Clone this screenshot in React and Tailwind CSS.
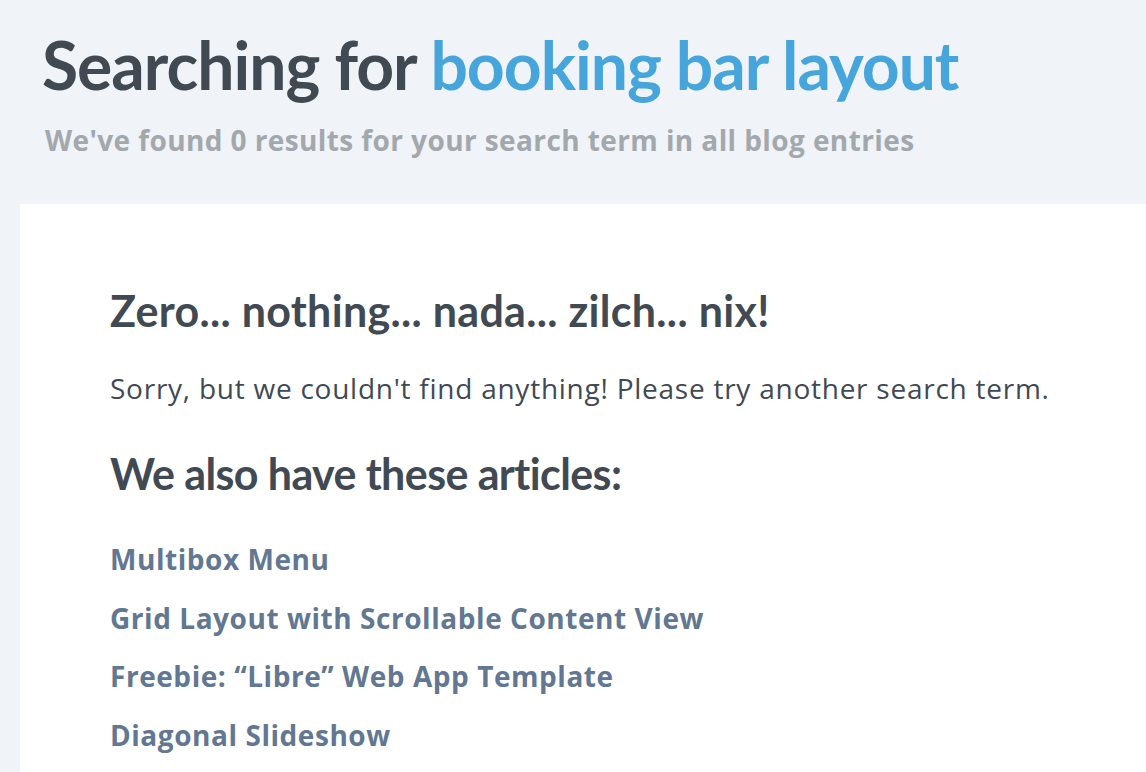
import React from 'react';

const articles = [
  'Multibox Menu',
  'Grid Layout with Scrollable Content View',
  'Freebie: \u201cLibre\u201d Web App Template',
  'Diagonal Slideshow',
];

const App = () => {
  return (
    <div className="min-h-[772px] bg-[#f0f3f8] font-['Lato',sans-serif] text-[#414a52] overflow-hidden">
      <header className="pl-[42px] pt-[25px] pb-[47px]">
        <h1 className="text-[66px] leading-[80px] font-bold tracking-[-1px] whitespace-nowrap">
          Searching for <span className="text-[#46a6dc]">booking bar layout</span>
        </h1>
        <p className="mt-[18px] pl-[3px] font-['Open_Sans',sans-serif] text-[28px] leading-[34px] font-bold tracking-[0.4px] text-[#a3a8ad] whitespace-nowrap">
          We've found 0 results for your search term in all blog entries
        </p>
      </header>

      <main className="ml-[20px] bg-white pl-[90px] pt-[81px] pb-[40px]">
        <h2 className="text-[43px] leading-[52px] font-bold tracking-[0.3px] whitespace-nowrap">
          Zero... nothing... nada... zilch... nix!
        </h2>
        <p className="mt-[34px] font-['Open_Sans',sans-serif] text-[28px] leading-[34px] tracking-[0.75px] text-[#3f4a54] whitespace-nowrap">
          Sorry, but we couldn't find anything! Please try another search term.
        </p>
        <h2 className="mt-[43px] text-[43px] leading-[52px] font-bold tracking-[-0.6px] whitespace-nowrap">
          We also have these articles:
        </h2>
        <ul className="mt-[30px] flex flex-col font-['Open_Sans',sans-serif] text-[28px] leading-[58.7px]">
          {articles.map((a) => (
            <li key={a}>
              <a href="#" className="font-bold tracking-[0.55px] text-[#627791] whitespace-nowrap">
                {a}
              </a>
            </li>
          ))}
        </ul>
      </main>
    </div>
  );
};

export default App;
